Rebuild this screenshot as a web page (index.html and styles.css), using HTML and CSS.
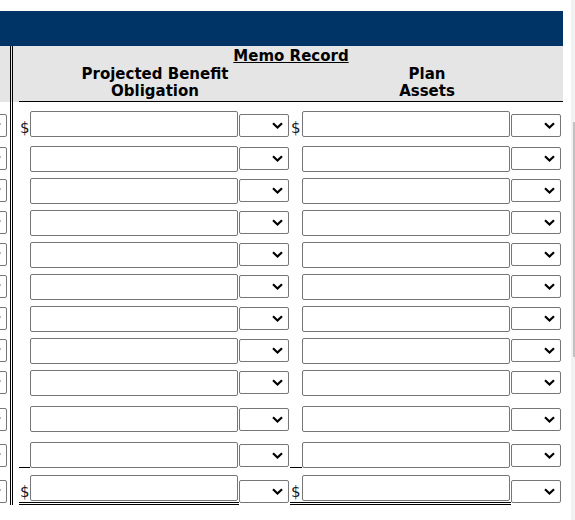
FILE: index.html
```html
<!DOCTYPE html>
<html lang="en">
<head>
<meta charset="utf-8">
<title>Memo Record</title>
<link rel="stylesheet" href="styles.css">
</head>
<body>
<div class="main">
  <div class="banner"></div>
  <table class="sheet">
    <colgroup>
      <col class="w-stub"><col class="w-gap"><col class="w-cur"><col class="w-inp"><col class="w-pick"><col class="w-cur2"><col class="w-inp"><col class="w-pick2">
    </colgroup>
    <thead>
      <tr>
        <th class="hstub"></th>
        <th class="gap hgap"></th>
        <th class="head" colspan="6">
          <div class="memo">Memo Record</div>
          <div class="cols">
            <div>Projected Benefit<br>Obligation</div>
            <div>Plan<br>Assets</div>
          </div>
        </th>
      </tr>
    </thead>
    <tbody>
      <tr class="row r-a">
        <td><div class="clip"><div class="sel"><svg width="11" height="7" viewBox="0 0 11 7"><path d="M1 1.2l4.5 4.3 4.5-4.3"/></svg></div></div></td>
        <td class="gap"></td>
        <td class="cur"><div class="dollar">$</div></td>
        <td><input class="field" type="text"></td>
        <td><div class="sel"><svg width="11" height="7" viewBox="0 0 11 7"><path d="M1 1.2l4.5 4.3 4.5-4.3"/></svg></div></td>
        <td class="cur"><div class="dollar">$</div></td>
        <td><input class="field" type="text"></td>
        <td><div class="sel"><svg width="11" height="7" viewBox="0 0 11 7"><path d="M1 1.2l4.5 4.3 4.5-4.3"/></svg></div></td>
      </tr>
      <tr class="row r-b">
        <td><div class="clip"><div class="sel"><svg width="11" height="7" viewBox="0 0 11 7"><path d="M1 1.2l4.5 4.3 4.5-4.3"/></svg></div></div></td>
        <td class="gap"></td>
        <td class="cur"></td>
        <td><input class="field" type="text"></td>
        <td><div class="sel"><svg width="11" height="7" viewBox="0 0 11 7"><path d="M1 1.2l4.5 4.3 4.5-4.3"/></svg></div></td>
        <td class="cur"></td>
        <td><input class="field" type="text"></td>
        <td><div class="sel"><svg width="11" height="7" viewBox="0 0 11 7"><path d="M1 1.2l4.5 4.3 4.5-4.3"/></svg></div></td>
      </tr>
      <tr class="row r-c">
        <td><div class="clip"><div class="sel"><svg width="11" height="7" viewBox="0 0 11 7"><path d="M1 1.2l4.5 4.3 4.5-4.3"/></svg></div></div></td>
        <td class="gap"></td>
        <td class="cur"></td>
        <td><input class="field" type="text"></td>
        <td><div class="sel"><svg width="11" height="7" viewBox="0 0 11 7"><path d="M1 1.2l4.5 4.3 4.5-4.3"/></svg></div></td>
        <td class="cur"></td>
        <td><input class="field" type="text"></td>
        <td><div class="sel"><svg width="11" height="7" viewBox="0 0 11 7"><path d="M1 1.2l4.5 4.3 4.5-4.3"/></svg></div></td>
      </tr>
      <tr class="row r-c">
        <td><div class="clip"><div class="sel"><svg width="11" height="7" viewBox="0 0 11 7"><path d="M1 1.2l4.5 4.3 4.5-4.3"/></svg></div></div></td>
        <td class="gap"></td>
        <td class="cur"></td>
        <td><input class="field" type="text"></td>
        <td><div class="sel"><svg width="11" height="7" viewBox="0 0 11 7"><path d="M1 1.2l4.5 4.3 4.5-4.3"/></svg></div></td>
        <td class="cur"></td>
        <td><input class="field" type="text"></td>
        <td><div class="sel"><svg width="11" height="7" viewBox="0 0 11 7"><path d="M1 1.2l4.5 4.3 4.5-4.3"/></svg></div></td>
      </tr>
      <tr class="row r-c">
        <td><div class="clip"><div class="sel"><svg width="11" height="7" viewBox="0 0 11 7"><path d="M1 1.2l4.5 4.3 4.5-4.3"/></svg></div></div></td>
        <td class="gap"></td>
        <td class="cur"></td>
        <td><input class="field" type="text"></td>
        <td><div class="sel"><svg width="11" height="7" viewBox="0 0 11 7"><path d="M1 1.2l4.5 4.3 4.5-4.3"/></svg></div></td>
        <td class="cur"></td>
        <td><input class="field" type="text"></td>
        <td><div class="sel"><svg width="11" height="7" viewBox="0 0 11 7"><path d="M1 1.2l4.5 4.3 4.5-4.3"/></svg></div></td>
      </tr>
      <tr class="row r-c">
        <td><div class="clip"><div class="sel"><svg width="11" height="7" viewBox="0 0 11 7"><path d="M1 1.2l4.5 4.3 4.5-4.3"/></svg></div></div></td>
        <td class="gap"></td>
        <td class="cur"></td>
        <td><input class="field" type="text"></td>
        <td><div class="sel"><svg width="11" height="7" viewBox="0 0 11 7"><path d="M1 1.2l4.5 4.3 4.5-4.3"/></svg></div></td>
        <td class="cur"></td>
        <td><input class="field" type="text"></td>
        <td><div class="sel"><svg width="11" height="7" viewBox="0 0 11 7"><path d="M1 1.2l4.5 4.3 4.5-4.3"/></svg></div></td>
      </tr>
      <tr class="row r-c">
        <td><div class="clip"><div class="sel"><svg width="11" height="7" viewBox="0 0 11 7"><path d="M1 1.2l4.5 4.3 4.5-4.3"/></svg></div></div></td>
        <td class="gap"></td>
        <td class="cur"></td>
        <td><input class="field" type="text"></td>
        <td><div class="sel"><svg width="11" height="7" viewBox="0 0 11 7"><path d="M1 1.2l4.5 4.3 4.5-4.3"/></svg></div></td>
        <td class="cur"></td>
        <td><input class="field" type="text"></td>
        <td><div class="sel"><svg width="11" height="7" viewBox="0 0 11 7"><path d="M1 1.2l4.5 4.3 4.5-4.3"/></svg></div></td>
      </tr>
      <tr class="row r-c">
        <td><div class="clip"><div class="sel"><svg width="11" height="7" viewBox="0 0 11 7"><path d="M1 1.2l4.5 4.3 4.5-4.3"/></svg></div></div></td>
        <td class="gap"></td>
        <td class="cur"></td>
        <td><input class="field" type="text"></td>
        <td><div class="sel"><svg width="11" height="7" viewBox="0 0 11 7"><path d="M1 1.2l4.5 4.3 4.5-4.3"/></svg></div></td>
        <td class="cur"></td>
        <td><input class="field" type="text"></td>
        <td><div class="sel"><svg width="11" height="7" viewBox="0 0 11 7"><path d="M1 1.2l4.5 4.3 4.5-4.3"/></svg></div></td>
      </tr>
      <tr class="row r-c">
        <td><div class="clip"><div class="sel"><svg width="11" height="7" viewBox="0 0 11 7"><path d="M1 1.2l4.5 4.3 4.5-4.3"/></svg></div></div></td>
        <td class="gap"></td>
        <td class="cur"></td>
        <td><input class="field" type="text"></td>
        <td><div class="sel"><svg width="11" height="7" viewBox="0 0 11 7"><path d="M1 1.2l4.5 4.3 4.5-4.3"/></svg></div></td>
        <td class="cur"></td>
        <td><input class="field" type="text"></td>
        <td><div class="sel"><svg width="11" height="7" viewBox="0 0 11 7"><path d="M1 1.2l4.5 4.3 4.5-4.3"/></svg></div></td>
      </tr>
      <tr class="row r-d">
        <td><div class="clip"><div class="sel"><svg width="11" height="7" viewBox="0 0 11 7"><path d="M1 1.2l4.5 4.3 4.5-4.3"/></svg></div></div></td>
        <td class="gap"></td>
        <td class="cur"></td>
        <td><input class="field" type="text"></td>
        <td><div class="sel"><svg width="11" height="7" viewBox="0 0 11 7"><path d="M1 1.2l4.5 4.3 4.5-4.3"/></svg></div></td>
        <td class="cur"></td>
        <td><input class="field" type="text"></td>
        <td><div class="sel"><svg width="11" height="7" viewBox="0 0 11 7"><path d="M1 1.2l4.5 4.3 4.5-4.3"/></svg></div></td>
      </tr>
      <tr class="row r-d">
        <td><div class="clip"><div class="sel"><svg width="11" height="7" viewBox="0 0 11 7"><path d="M1 1.2l4.5 4.3 4.5-4.3"/></svg></div></div></td>
        <td class="gap"></td>
        <td class="cur under"></td>
        <td><input class="field" type="text"></td>
        <td><div class="sel"><svg width="11" height="7" viewBox="0 0 11 7"><path d="M1 1.2l4.5 4.3 4.5-4.3"/></svg></div></td>
        <td class="cur under"></td>
        <td><input class="field" type="text"></td>
        <td><div class="sel"><svg width="11" height="7" viewBox="0 0 11 7"><path d="M1 1.2l4.5 4.3 4.5-4.3"/></svg></div></td>
      </tr>
      <tr class="row r-e">
        <td><div class="clip"><div class="sel"><svg width="11" height="7" viewBox="0 0 11 7"><path d="M1 1.2l4.5 4.3 4.5-4.3"/></svg></div></div></td>
        <td class="gap"></td>
        <td class="cur dbl"><div class="dollar">$</div></td>
        <td class="dbl"><input class="field" type="text"></td>
        <td><div class="sel"><svg width="11" height="7" viewBox="0 0 11 7"><path d="M1 1.2l4.5 4.3 4.5-4.3"/></svg></div></td>
        <td class="cur dbl"><div class="dollar">$</div></td>
        <td class="dbl"><input class="field" type="text"></td>
        <td><div class="sel"><svg width="11" height="7" viewBox="0 0 11 7"><path d="M1 1.2l4.5 4.3 4.5-4.3"/></svg></div></td>
      </tr>
    </tbody>
  </table>
</div>
<div class="track"><div class="thumb"></div></div>
</body>
</html>
```

FILE: styles.css
```css
* { box-sizing: border-box; }
html, body { margin: 0; padding: 0; background: #fff; }
body {
  width: 575px;
  height: 520px;
  overflow: hidden;
  display: flex;
  align-items: flex-start;
  font-family: "DejaVu Sans", Verdana, sans-serif;
  color: #000;
}
.main { width: 563px; padding-top: 11px; }
.banner { height: 35px; background: #003366; }

.sheet {
  width: 563px;
  table-layout: fixed;
  border-collapse: separate;
  border-spacing: 0;
}
.w-stub { width: 10px; }
.w-gap { width: 9px; }
.w-cur { width: 11px; }
.w-inp { width: 209px; }
.w-pick { width: 51px; }
.w-cur2 { width: 12px; }
.w-pick2 { width: 52px; }

.sheet th, .sheet td { padding: 0; vertical-align: top; }

.gap {
  background: linear-gradient(to right, #000 0 1px, transparent 1px 2px, #000 2px 3px, transparent 3px);
}
.sheet .hstub { background: #e5e5e5; }
.sheet .hgap {
  background: linear-gradient(to right, #000 0 1px, transparent 1px 2px, #000 2px 3px, transparent 3px), #e5e5e5;
}
.sheet .head {
  background: #e5e5e5;
  border-bottom: 1px solid #000;
  padding: 2px 0 1px 0;
  font-weight: bold;
  font-size: 15px;
  line-height: 17px;
  text-align: center;
}
.memo { text-decoration: underline; margin-bottom: 1px; }
.cols { display: flex; }
.cols > div { flex: 1; text-align: center; }

.row td { padding-top: var(--pt); }
.row .sel { margin-top: var(--so); }
.r-a { --pt: 9px; --so: 3px; }
.r-b { --pt: 9px; --so: 1px; }
.r-c { --pt: 6px; --so: 1px; }
.r-d { --pt: 10px; --so: 2px; }
.r-e { --pt: 7px; --so: 5px; }

.sheet .cur { padding-left: 1px; }
.dollar {
  height: 26px;
  padding-top: 4px;
  line-height: 26px;
  font-size: 15px;
  color: #1a1a2a;
}
.under { border-bottom: 1px solid #000; }
.sheet .row td.dbl { border-bottom: 3px double #000; padding-bottom: 1px; }

.field {
  display: block;
  width: 208px;
  height: 26px;
  margin: 0;
  padding: 0 4px;
  border: 1px solid #767676;
  border-radius: 2px;
  background: #fff;
  font: 13px "DejaVu Sans", sans-serif;
}

.sel {
  width: 50px;
  height: 23px;
  border: 1px solid #767676;
  border-radius: 2px;
  background: #fff;
  display: flex;
  align-items: center;
  justify-content: flex-end;
  padding-right: 5px;
}
.sel svg { display: block; }
.sel path { fill: none; stroke: #000; stroke-width: 2.2; }

.clip { width: 10px; overflow: hidden; }
.clip .sel { margin-left: -43px; }

.track {
  margin-left: 8px;
  width: 4px;
  height: 520px;
  background: #f1f1f1;
}
.thumb {
  margin: 122px 0 0 2px;
  width: 2px;
  height: 235px;
  background: #c1c1c1;
}
```
